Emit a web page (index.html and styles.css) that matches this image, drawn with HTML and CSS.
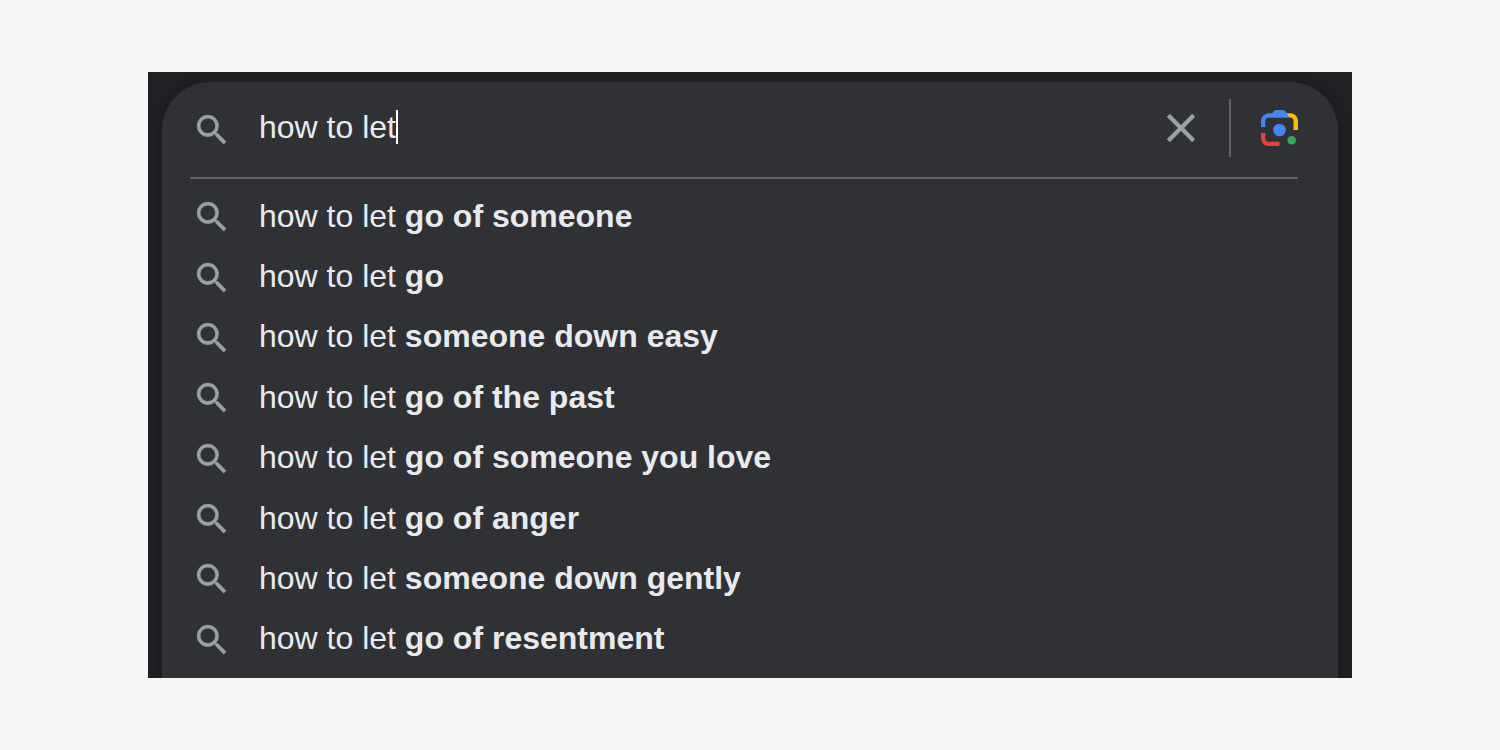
FILE: index.html
```html
<!DOCTYPE html>
<html lang="en">
<head>
<meta charset="utf-8">
<title>how to let</title>
<link rel="stylesheet" href="styles.css">
</head>
<body>
<svg class="sprite" aria-hidden="true">
  <symbol id="search" viewBox="0 0 24 24"><path d="M15.5 14h-.79l-.28-.27A6.47 6.47 0 0 0 16 9.5 6.5 6.5 0 1 0 9.5 16c1.61 0 3.09-.59 4.23-1.57l.27.28v.79l5 4.99L20.49 19l-4.99-5zm-6 0C7.01 14 5 11.99 5 9.5S7.01 5 9.5 5 14 7.01 14 9.5 11.99 14 9.5 14z"/></symbol>
</svg>
<main class="stage">
  <form class="panel" role="search">
    <div class="bar">
      <svg class="icon" aria-hidden="true"><use href="#search"/></svg>
      <div class="field">
        <input class="query" type="text" value="how to let" aria-label="Search" autocomplete="off" spellcheck="false">
        <span class="caret"></span>
      </div>
      <div class="tools">
        <button class="clear" type="button" aria-label="Clear">
          <svg viewBox="0 0 24 24"><path d="M19 6.41 17.59 5 12 10.59 6.41 5 5 6.41 10.59 12 5 17.59 6.41 19 12 13.41 17.59 19 19 17.59 13.41 12z"/></svg>
        </button>
        <span class="divider"></span>
        <button class="lens" type="button" aria-label="Search by image">
          <svg viewBox="0 0 38 38">
            <path d="M26 4.200l3 4.300h1a3.500 3.500 0 0 1 3.500 3.500v9H38v-9.200A7.600 7.600 0 0 0 30.400 4.200z" fill="#fbbc04"/>
            <path d="M1 18v-6a7.800 7.800 0 0 1 7.800-7.800h3.500L14 2q1-1 2.400-1h6.400q1.400 0 2.400 1l4.400 6.700H8.800A3.600 3.600 0 0 0 5.300 12v6z" fill="#4285f4"/>
            <path d="M1 24h4.300v5.200A3.600 3.600 0 0 0 8.800 32.800h10.700V37H8.800A7.800 7.800 0 0 1 1 29.200z" fill="#ea4335"/>
            <circle cx="19.500" cy="21" r="6.300" fill="#4285f4"/>
            <circle cx="31.700" cy="31.200" r="4.300" fill="#34a853"/>
          </svg>
        </button>
      </div>
    </div>
    <ul class="list">
      <li class="row"><svg class="icon" aria-hidden="true"><use href="#search"/></svg><span class="text">how to let <b>go of someone</b></span></li>
      <li class="row"><svg class="icon" aria-hidden="true"><use href="#search"/></svg><span class="text">how to let <b>go</b></span></li>
      <li class="row"><svg class="icon" aria-hidden="true"><use href="#search"/></svg><span class="text">how to let <b>someone down easy</b></span></li>
      <li class="row"><svg class="icon" aria-hidden="true"><use href="#search"/></svg><span class="text">how to let <b>go of the past</b></span></li>
      <li class="row"><svg class="icon" aria-hidden="true"><use href="#search"/></svg><span class="text">how to let <b>go of someone you love</b></span></li>
      <li class="row"><svg class="icon" aria-hidden="true"><use href="#search"/></svg><span class="text">how to let <b>go of anger</b></span></li>
      <li class="row"><svg class="icon" aria-hidden="true"><use href="#search"/></svg><span class="text">how to let <b>someone down gently</b></span></li>
      <li class="row"><svg class="icon" aria-hidden="true"><use href="#search"/></svg><span class="text">how to let <b>go of resentment</b></span></li>
    </ul>
  </form>
</main>
</body>
</html>
```
FILE: styles.css
```css
* { box-sizing: border-box; }

body {
  display: flex;
  min-height: 100vh;
  margin: 0;
  padding: 72px 148px;
  background: #f7f7f7;
  color: #e8eaed;
  font: 32px/36px "Liberation Sans", Arial, sans-serif;
}

.sprite { display: none; }

.stage {
  display: flex;
  flex: 1;
  padding: 10px 14px 0;
  background: #202125;
  overflow: hidden;
}

.panel {
  display: flex;
  flex: 1;
  flex-direction: column;
  padding-bottom: 8px;
  border-radius: 48px 48px 0 0;
  background: #303135;
  box-shadow: 0 2px 12px rgba(0, 0, 0, 0.3);
}

.bar {
  display: flex;
  align-items: center;
  height: 97px;
  margin: 0 40px 0 28px;
  padding-left: 2px;
  border-bottom: 2px solid #626468;
}

.icon {
  flex: none;
  width: 40px;
  height: 40px;
  margin-right: 27px;
  fill: #9aa0a6;
  stroke: #9aa0a6;
  stroke-width: 0.2px;
}

.field {
  display: flex;
  flex: 1;
  align-items: center;
  padding-bottom: 6px;
}

.query {
  field-sizing: content;
  padding: 0;
  border: 0;
  outline: 0;
  background: none;
  color: inherit;
  font: inherit;
}

.caret {
  width: 2px;
  height: 34px;
  background: #ffffff;
}

.tools {
  display: flex;
  align-items: center;
  padding-bottom: 4px;
}

.clear,
.lens {
  display: flex;
  padding: 0;
  border: 0;
  background: none;
}

.clear svg {
  width: 48px;
  height: 48px;
  fill: #9aa0a6;
  stroke: #9aa0a6;
  stroke-width: 0.2px;
}

.divider {
  width: 2px;
  height: 58px;
  margin: 0 29px 0 24px;
  background: #5f6165;
}

.lens svg {
  width: 38px;
  height: 38px;
}

.list {
  display: grid;
  flex: 1;
  grid-auto-rows: 1fr;
  margin: 0;
  padding: 8px 30px 0;
  list-style: none;
}

.row {
  display: flex;
  align-items: center;
}

.text { padding-bottom: 3px; }
```
